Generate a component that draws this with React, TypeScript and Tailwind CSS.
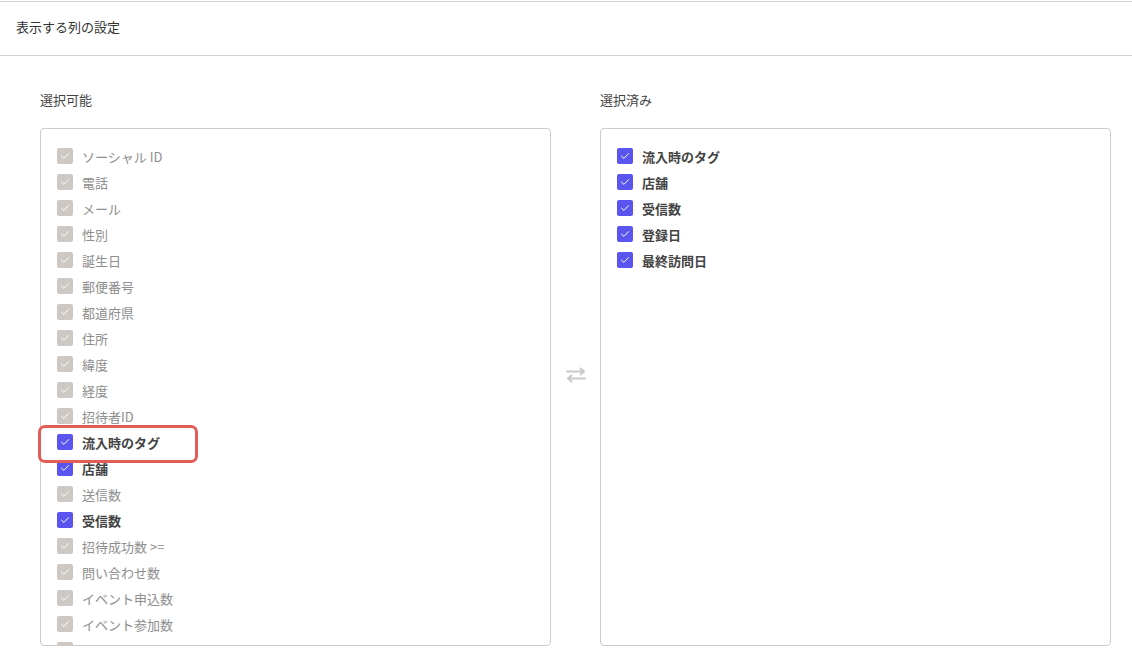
import React from "react";

type Item = { label: string; checked: boolean };

const AVAILABLE: Item[] = [
  { label: "ソーシャル ID", checked: false },
  { label: "電話", checked: false },
  { label: "メール", checked: false },
  { label: "性別", checked: false },
  { label: "誕生日", checked: false },
  { label: "郵便番号", checked: false },
  { label: "都道府県", checked: false },
  { label: "住所", checked: false },
  { label: "緯度", checked: false },
  { label: "経度", checked: false },
  { label: "招待者ID", checked: false },
  { label: "流入時のタグ", checked: true },
  { label: "店舗", checked: true },
  { label: "送信数", checked: false },
  { label: "受信数", checked: true },
  { label: "招待成功数 >=", checked: false },
  { label: "問い合わせ数", checked: false },
  { label: "イベント申込数", checked: false },
  { label: "イベント参加数", checked: false },
  { label: "登録日", checked: false },
];

const SELECTED = ["流入時のタグ", "店舗", "受信数", "登録日", "最終訪問日"];

const FONT = "font-['Noto_Sans_CJK_JP','Noto_Sans',sans-serif]";

function Check({ on }: { on: boolean }) {
  return (
    <span
      className={`flex h-4 w-4 shrink-0 items-center justify-center rounded-[2px] ${
        on ? "bg-[#5a55ef]" : "bg-[#cdc8c3]"
      }`}
    >
      <svg width="10" height="8" viewBox="0 0 10 8" fill="none">
        <path d="M1.5 4.2 L3.9 6.4 L8.6 1.6" stroke="white" strokeWidth="1" strokeLinecap="round" strokeLinejoin="round" />
      </svg>
    </span>
  );
}

function Row({ item }: { item: Item }) {
  return (
    <li className="flex h-[26px] items-center gap-[9px]">
      <Check on={item.checked} />
      <span
        className={`text-[13px] leading-none ${
          item.checked ? "font-bold text-[#444]" : "text-[#8e8e8e]"
        }`}
      >
        {item.label}
      </span>
    </li>
  );
}

function SwapIcon() {
  return (
    <svg width="22" height="16" viewBox="0 0 22 16" fill="none" stroke="#c9c9c9" strokeWidth="2" strokeLinecap="round" strokeLinejoin="round">
      <path d="M2 4.5 H19 M15.5 1.5 L19 4.5 L15.5 7.5" />
      <path d="M20 11.5 H3 M6.5 8.5 L3 11.5 L6.5 14.5" />
    </svg>
  );
}

export default function App() {
  return (
    <div className={`h-[650px] w-[1132px] overflow-hidden bg-white ${FONT}`}>
      <div className="mt-px flex h-[55px] items-center border-y border-[#d6d3cf] pb-[4px] pl-4">
        <h2 className="text-[13px] text-[#333]">表示する列の設定</h2>
      </div>

      <div className="pl-[40px] pr-[21px]">
        <div className="mt-[34px] grid grid-cols-[511px_49px_511px]">
          <p className="h-5 text-[13px] leading-5 text-[#444]">選択可能</p>
          <span />
          <p className="h-5 text-[13px] leading-5 text-[#444]">選択済み</p>
        </div>

        <div className="mt-[18px] grid grid-cols-[511px_49px_511px] items-center">
          <div className="relative">
            <div className="h-[518px] overflow-hidden rounded-[4px] border border-[#cfcac5] px-4 pt-[14px]">
              <ul>
                {AVAILABLE.map((it) => (
                  <Row key={it.label} item={it} />
                ))}
              </ul>
            </div>
            {/* annotation around 流入時のタグ */}
            <span className="pointer-events-none absolute left-[-2px] top-[297px] h-[38px] w-[160px] rounded-[7px] border-[3px] border-[#e35d57]" />
          </div>

          <div className="mb-[24px] flex justify-center">
            <SwapIcon />
          </div>

          <div className="h-[518px] overflow-hidden rounded-[4px] border border-[#cfcac5] px-4 pt-[14px]">
            <ul>
              {SELECTED.map((s) => (
                <Row key={s} item={{ label: s, checked: true }} />
              ))}
            </ul>
          </div>
        </div>
      </div>
    </div>
  );
}
